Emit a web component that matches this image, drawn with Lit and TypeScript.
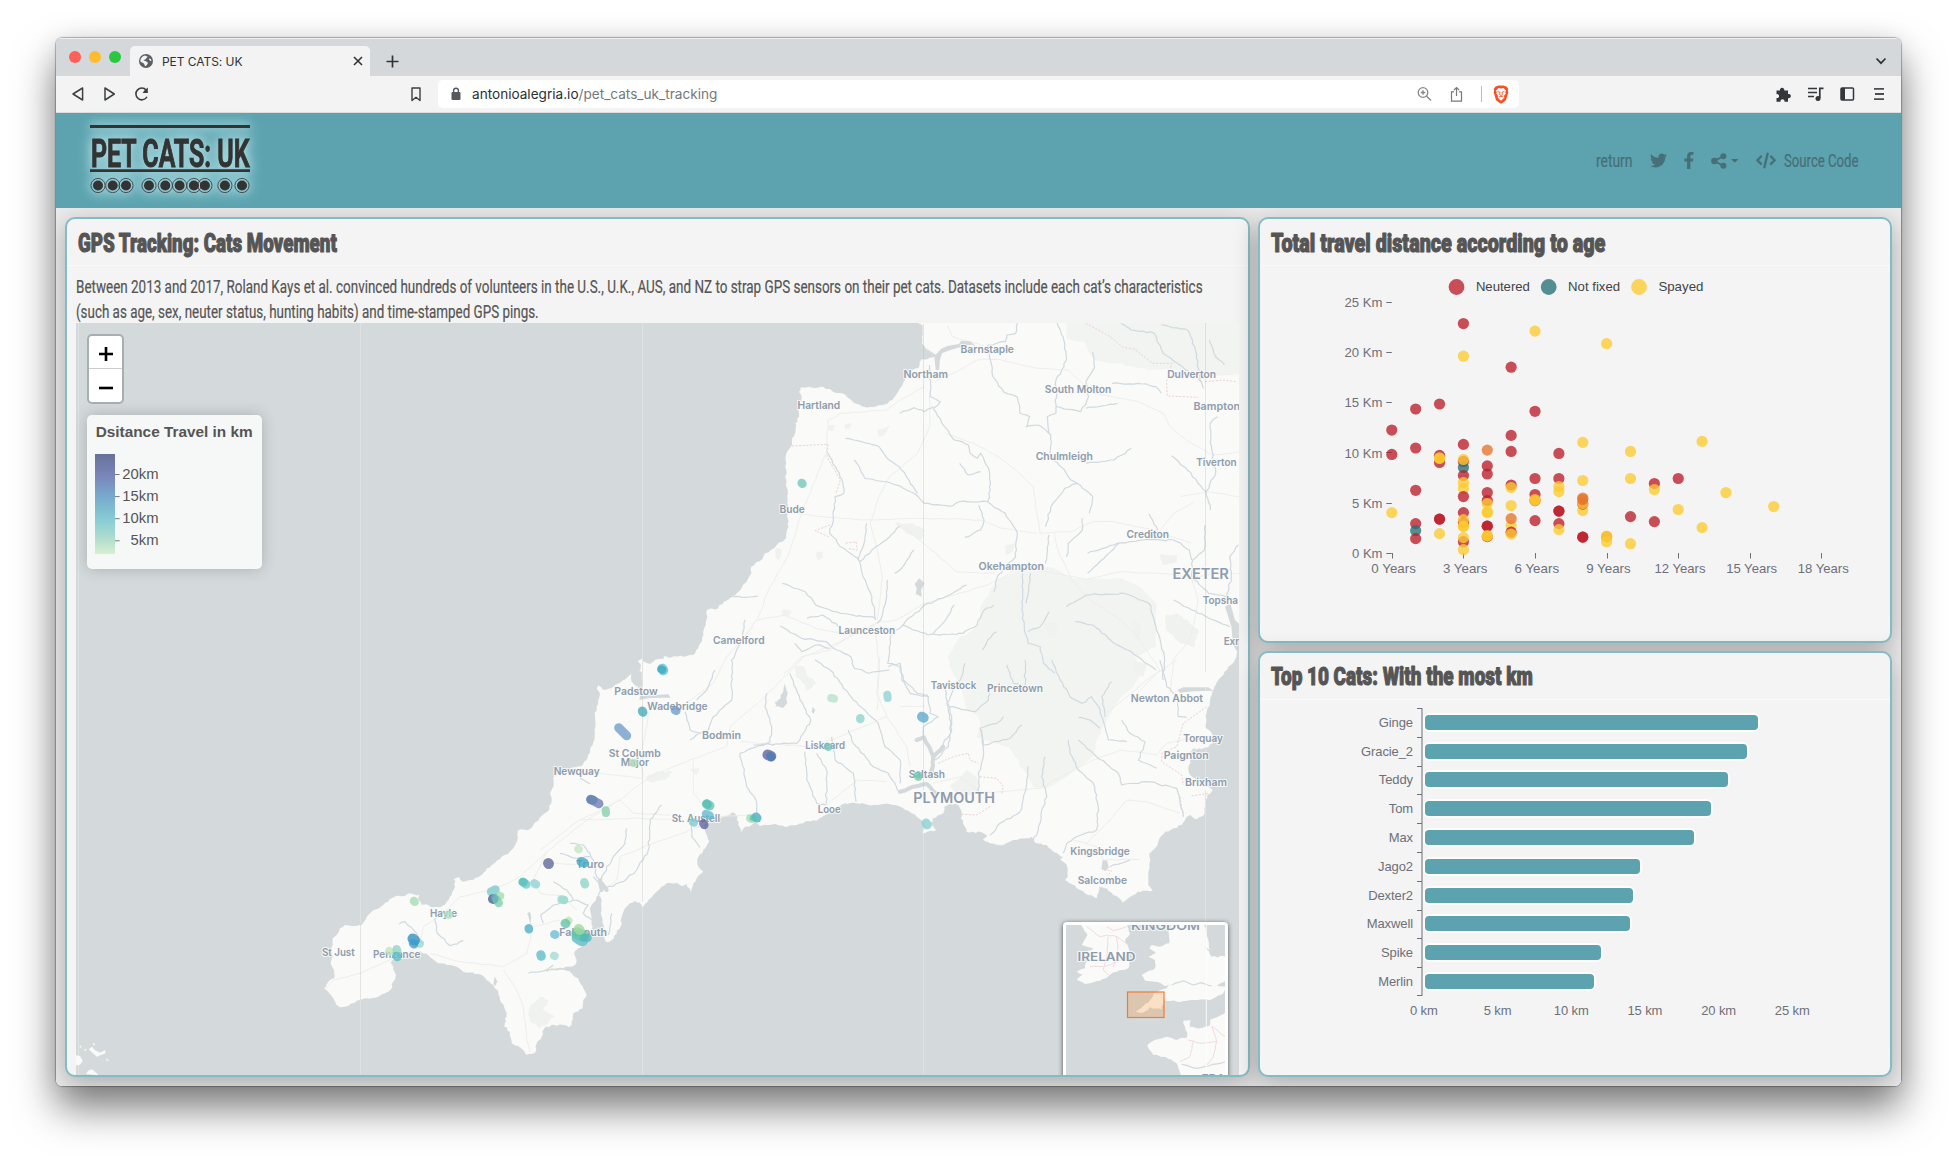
import { LitElement, html, svg, css } from "lit";
import { customElement, property } from "lit/decorators.js";

type Pt = [number, number];

/* ---------- map sheets: each one has its own origin and scale ---------- */
const SHEETS: Record<string, [number, number, number, number]> = {
  A: [700, 310, 2.851, 3],
  B: [540, 560, 3, 3],
  C: [300, 780, 3, 3],
  D: [900, 660, 3, 3],
  E: [0, 900, 3, 3],
};
const place = (s: string, x: number, y: number): Pt => {
  const [ox, oy, sx, sy] = SHEETS[s];
  return [ox + x / sx, oy + y / sy];
};
const pts = (s: string, raw: string): Pt[] =>
  raw.trim().split(/\s+/).map((p) => {
    const [x, y] = p.split(",").map(Number);
    return place(s, x, y);
  });

/* splits every segment and nudges the new vertices, so coasts look rugged */
function rough(list: Pt[], amp: number, step: number): Pt[] {
  let seed = 7;
  const rnd = () => {
    seed = (seed * 16807) % 2147483647;
    return seed / 2147483647 - 0.5;
  };
  const out: Pt[] = [];
  for (let i = 0; i < list.length - 1; i++) {
    const [x0, y0] = list[i];
    const [x1, y1] = list[i + 1];
    const n = Math.max(1, Math.round(Math.hypot(x1 - x0, y1 - y0) / step));
    for (let k = 0; k < n; k++) {
      const t = k / n;
      const a = k ? amp : 0;
      out.push([x0 + (x1 - x0) * t + rnd() * a, y0 + (y1 - y0) * t + rnd() * a]);
    }
  }
  out.push(list[list.length - 1]);
  return out;
}
const d = (list: Pt[], close = false) =>
  "M" + list.map((p) => p[0].toFixed(1) + " " + p[1].toFixed(1)).join("L") + (close ? "Z" : "");

const COAST: Pt[] = [
  ...pts("A", "612,36 634,45 633,100 645,118 668,140 648,148 632,148 622,175 605,180 590,200 570,235 548,270 520,286 495,291 462,289 438,278 420,262 405,250 385,248 370,237 352,231 330,234 310,230 287,232 282,245 290,262 280,290 282,320 272,340 272,365 263,385 262,405 248,425 244,450 246,480 243,500 250,540 250,570 250,610 252,650 245,685 235,695 205,718 185,730 178,748 160,757 146,770 143,795 125,822 105,850 92,860 75,872 55,885 52,895 20,900 18,930 12,955 5,985"),
  ...pts("B", "487,240 475,265 460,285 430,290 400,289 385,293 372,289 370,298 345,300 330,312 308,305 306,296 293,304 303,315 298,335 302,352 298,375 290,380 275,365 275,342 262,352 250,360 240,368 225,375 212,385 195,390 175,376 170,385 180,400 175,420 170,440 165,470 166,500 163,540 150,570 140,600 125,618 105,622 80,632 60,640 40,652 40,680 30,700 34,730 22,755 0,772"),
  ...pts("C", "715,122 700,135 690,147 655,150 652,165 650,185 640,205 625,222 605,230 600,237 580,252 560,265 545,285 520,300 490,305 478,292 462,297 465,320 455,345 440,365 420,382 400,382 385,375 365,375 356,360 358,345 340,343 330,340 315,348 290,347 275,355 265,365 245,378 230,388 215,395 200,410 190,428 178,435 155,438 135,435 120,445 110,465 98,475 95,500 98,530 92,550 103,575 103,595 85,605 72,625 88,640 100,655 110,675 120,682 145,677 165,668 180,660 200,655 235,650 255,640 273,628 280,605 288,585 280,560 272,548 285,535 300,535 330,520 355,515 378,520 395,535 415,550 440,555 470,560 500,578 535,582 560,600 580,615 595,635 600,660 612,680 620,700 613,740 630,755 635,790 655,798 672,812 678,824 705,818 710,790 725,770 733,745 755,735 790,735 805,742 815,735 820,700 848,685 850,660 860,645 850,625 838,605 835,595 815,580 800,572 760,570 740,575 735,567 790,565 825,555 830,540 822,520 835,505 850,497 865,485 866,465 878,440 870,385 895,345 905,360 902,400 912,440 905,455 915,480 920,487 935,480 950,460 962,440 965,410 975,385 990,370 1005,362 1020,368 1028,382 1045,360 1065,340 1085,320 1105,308 1130,308 1145,318 1160,312"),
  ...pts("B", "453,998 460,970 470,955 490,935 475,920 472,900 490,870 508,845 500,825 492,795 510,778 540,775 560,768 578,757 592,770 595,795 605,818 615,800 635,795 645,785 660,798 700,793 735,800 770,795 790,790 795,785 830,782 850,768 870,758 885,745 915,730 950,730 1000,735 1030,732 1060,735 1085,742 1105,752 1130,770 1150,785 1157,800 1148,820"),
  ...pts("D", "62,520 108,510 92,490 98,475 130,460 133,440 150,432 175,435 185,455 183,475 195,500 200,515 245,517 262,528 248,537 270,550 310,555 340,540 380,535 395,530 405,548 440,555 455,570 475,583 490,592 480,598 500,615 503,650 495,660 515,672 540,690 565,705 590,715 598,680 620,685 635,698 655,712 668,728 685,715 712,695 740,692 758,692 745,675 745,645 750,605 748,580 765,565 775,545 795,515 820,505 845,495 855,480 870,465 890,478 912,465 915,430 922,405 938,390 915,375 895,360 870,345 865,325 870,300 866,280 880,265 905,268 925,262 942,248 938,225 918,205 920,160 930,120 940,90 955,60 970,45 985,20 1005,0"),
  ...pts("A", "1530,1030 1545,1020 1560,1000 1560,36"),
];

const WATERS: Pt[][] = [
  pts("A", "1497,890 1512,880 1525,930 1540,945 1540,1040 1520,1005 1515,950"),
  pts("A", "640,112 668,140 672,180 682,180 684,150 690,130 708,122 740,112 745,108 775,104 790,112 770,94 745,92 738,102 705,108 688,116 672,134"),
  pts("C", "690,395 694,410 690,440 688,420 682,400"),
  pts("B", "740,370 735,400 742,430 728,445 718,440 705,430 705,425 722,425 722,405 735,390"),
  pts("A", "625,805 640,820 630,840 632,860 615,852 618,835 612,822"),
  pts("D", "608,600 622,602 626,622 618,632 604,628"),
  pts("D", "832,90 850,82 925,82 940,92 880,94 840,98"),
  pts("B", "300,408 385,403 392,413 330,414 298,420"),
  pts("C", "584,590 592,604 586,618 580,612"),
  pts("B", "818,440 826,450 820,462 815,455"),
  pts("A", "240,1120 250,1150 240,1185 215,1190 222,1170 236,1160"),
];

const GREENS: Pt[][] = [
  pts("A", "1045,36 1560,36 1560,185 1500,195 1460,205 1400,190 1350,180 1280,180 1200,160 1125,150 1095,95 1045,85"),
  [
    ...pts("A", "930,770 1000,770 1060,805 1200,805 1260,835 1300,880 1300,1010 1240,1040 1260,1085"),
    ...pts("D", "700,80 650,130 620,180 605,205 580,290 540,320 500,350 440,385 400,380 370,330 325,260 280,250 230,230 240,200 235,170 200,150 185,90 150,20"),
    ...pts("A", "705,1040 720,1020 740,980 790,950 810,870 850,810"),
  ],
];
const PATCHES: Pt[][] = [
  pts("C", "690,680 720,650 745,660 730,690 765,710 720,745 690,725 685,700"),
  pts("B", "320,650 350,635 400,635 380,655 340,668 318,660"),
  pts("B", "765,320 790,318 800,345 830,370 800,392 790,370 768,350"),
  pts("B", "725,150 755,152 745,170 730,168"),
  pts("A", "365,350 385,345 380,362 368,362"), pts("A", "412,345 432,340 428,355 414,357"),
  pts("A", "505,365 540,345 530,370 512,382"), pts("A", "1310,735 1360,735 1360,755 1320,765"),
  pts("A", "1325,920 1360,910 1420,960 1410,1010 1370,1000 1330,960"), pts("A", "980,940 1015,935 1020,975 995,985"),
  pts("A", "1230,925 1260,945 1250,990 1232,960"), pts("A", "555,640 600,640 640,660 630,690 590,670"),
  pts("A", "330,730 350,725 350,742 335,752"), pts("A", "215,715 235,720 225,750 215,740"),
  pts("A", "870,710 895,700 890,725 872,735"), pts("B", "450,630 478,622 470,645"),
  pts("D", "700,5 740,10 730,50 705,40"), pts("D", "150,380 200,330 230,350 235,395 180,410"),
];

const RIVERS: Pt[][] = [
  ...["820,105 828,150 835,200 865,245 905,262 912,310 940,320 930,350 965,345 1000,375 998,430 1020,460 1050,500 1075,520 1120,560 1110,610",
    "1075,520 1040,535 1000,590 985,650", "1018,40 1035,80 1045,150 1015,210 1015,310 990,320 995,370",
    "1120,125 1125,170 1100,215 1108,260 1085,305 1015,290", "1100,295 1190,280", "1175,220 1260,222 1300,230 1315,250",
    "655,165 657,260 685,275 665,295 690,340 725,390 765,405 770,430 790,445 800,430 825,485 828,540 820,575 870,610 905,670 900,740 850,795 838,845",
    "820,575 740,575 720,588 640,580 610,550 545,520 470,505 440,450", "620,550 575,480 530,440 510,410 460,395 415,385",
    "570,310 610,293 640,305 665,290", "740,460 765,495 800,485", "795,585 810,630 800,660 755,682",
    "365,430 405,510 410,550 385,560 380,620 370,670 400,710 450,745 465,800 490,860 500,930",
    "475,640 470,690 450,750", "570,648 530,690 490,720 455,755", "610,720 570,780 555,790", "535,810 530,870 515,930 505,940",
    "235,820 300,845 330,885 400,910 500,925", "305,925 350,915 395,950", "228,948 290,985 360,995 380,1015 430,1040 440,1075 480,1090 540,1080",
    "270,1000 290,1025 330,1005 370,1015", "545,975 535,1060 570,1070 580,1110 620,1150 650,1155",
    "575,945 650,975 750,970 790,945 810,900 838,885", "760,825 700,860 640,885 560,960", "725,885 700,930 665,970",
    "920,790 918,900 925,960 935,1000 970,1010 980,1060 1010,1090", "943,790 930,880", "845,965 820,990 805,1020", "995,675 985,760",
    "1070,935 1120,945 1180,1000 1220,1020 1300,1080", "1045,890 1100,855 1210,850 1280,880 1300,950 1325,1050 1320,1110",
    "1100,460 1180,450 1230,415", "1345,437 1390,480 1420,520 1443,545", "1475,320 1455,340 1455,400 1470,490 1443,545 1455,600",
    "1440,645 1438,720 1405,750 1400,800 1450,850 1500,860", "1105,730 1190,700 1260,690 1350,690 1395,720 1402,750",
    "1195,700 1160,735 1125,770 1105,790", "1090,625 1090,660 1050,700 1045,740", "1280,612 1305,660", "1350,870 1420,910 1510,950",
    "1315,45 1390,60 1410,110 1425,200 1435,235", "1200,40 1230,60 1295,70 1320,130 1380,175 1430,215", "1452,90 1470,140 1495,165",
    "905,40 900,70 875,75 870,95 820,105", "95,860 130,862 165,858", "935,965 970,950 995,905", "1535,705 1510,740 1515,800 1500,860",
  ].map((r) => pts("A", r)),
  ...["615,180 605,240 575,300 575,420 520,470 505,510 480,520 450,510 435,455", "525,330 500,390 470,420",
    "680,400 675,440 695,500 690,545 600,580 620,680 648,720 650,760", "750,340 780,420 812,480 790,520 770,550 720,552 640,555",
    "795,575 800,660 830,730 860,735", "830,580 860,630 858,730", "925,510 940,550 1000,620 1045,640 1080,700",
    "825,300 870,330 940,420 1015,490 1035,560 1080,600 1080,670", "875,530 885,600 940,640 948,725",
    "1045,320 1080,310 1085,360 1110,400 1165,410 1170,460 1195,470 1175,485 1150,500 1150,530 1130,545",
    "1215,375 1220,420 1235,470 1225,560 1185,600", "365,735 330,780 325,870 290,930 250,965 195,985",
    "260,805 255,850 220,890 185,950 185,990", "455,790 455,830 480,862", "60,880 110,895 150,890", "90,850 130,855 160,900 170,950 185,970",
    "480,520 450,540", "1180,595 1165,650", "120,655 150,672",
  ].map((r) => pts("B", r)),
  ...["298,432 315,425 350,460 365,490", "405,415 412,460 450,497 490,482", "760,305 800,330 820,360 865,375",
    "730,430 722,405 760,375 820,360", "685,580 740,570 760,555", "865,375 850,400 875,420", "880,290 905,320 895,345", "935,400 930,440 925,465",
  ].map((r) => pts("C", r)),
  ...["195,10 185,50 160,90 140,130 155,210 110,285", "365,195 330,235 250,255 240,205 290,190 310,170", "150,140 225,155 265,120 270,100",
    "320,15 340,70 375,80 375,0", "455,0 480,60 510,110 545,130 575,110 600,150 615,200 625,240 680,245", "635,65 605,110 615,170",
    "665,180 690,220 735,245 715,300 770,325", "505,240 510,280 535,330 580,370 595,440 590,510 530,530 500,550 490,580",
    "535,240 590,290 655,340 665,375 740,365 830,385 840,430 850,470", "435,290 425,350 440,410 425,450 420,490 400,545",
    "385,320 380,370 360,455 300,490 270,525", "780,0 800,80 830,110 835,170 860,172", "245,210 250,290 235,340 235,400",
    "535,172 570,180 600,205", "630,620 690,600",
  ].map((r) => pts("D", r)),
];

const ESTUARIES: Pt[][] = [
  pts("D", "105,425 108,400 80,372 40,380 0,395"), pts("D", "96,345 100,290 72,232 50,240"), pts("D", "100,292 130,260"),
  pts("B", "300,340 300,400"), pts("B", "200,990 185,970"), pts("C", "905,330 900,300"),
];

const ROADS: Pt[][] = [
  ...["640,230 570,270 530,300 400,310 365,330 360,430 320,530 280,640 250,740 200,830 165,925 110,1000",
    "655,250 655,350 620,430 540,500 510,560 485,640 505,720 520,800 505,930",
    "670,215 740,180 790,150 850,148 960,175 1050,180 1090,220 1120,250 1250,275 1320,310 1340,350 1400,400 1460,435 1537,425",
    "700,370 780,400 850,440 900,480 950,530 960,610 970,670 1060,665 1120,635 1180,635 1310,665 1400,700",
    "270,610 350,620 460,630 640,625 800,630 860,655 960,670", "580,650 660,720 730,785 840,790",
    "500,940 560,930 640,880 820,825 920,770 1010,790 1100,808 1200,785 1300,790 1400,800 1537,790",
    "500,945 430,975 370,1020 290,1040 240,1090", "165,930 240,915 330,955 430,975", "705,45 720,80 810,108",
    "1010,670 1020,720 1060,810 1100,860 1200,930 1250,985 1310,1080 1240,1160", "1310,665 1350,610 1410,575", "500,960 510,1070 505,1200",
    "1370,560 1450,545 1537,560", "1400,800 1420,870 1400,980 1350,1050 1340,1150",
  ].map((r) => pts("A", r)),
  ...["1010,190 870,260 790,290 700,385 640,440 570,500 560,560 450,600 330,650 240,720 120,780 0,870",
    "600,545 800,560 900,530 1040,470 1100,560 1110,620", "640,200 560,290 520,370 420,440 330,450 300,600 310,650",
    "140,635 310,655", "460,600 460,700 500,750", "860,735 950,660 1040,665", "540,770 620,765 650,770", "120,780 300,775 395,778", "1020,290 1010,400 1040,470",
  ].map((r) => pts("B", r)),
  ...["960,60 860,120 740,215 660,290 580,330 480,350 430,400 370,440 360,490", "390,520 480,545 610,560 680,520 700,440 780,420",
    "360,500 270,540 180,580 100,600 80,625", "610,570 650,630 670,680 680,780 690,815", "745,250 830,253",
    "740,215 700,300 720,340 790,350 830,390", "960,60 1000,100 1110,105", "1200,140 1060,190 960,230 950,300 915,330",
  ].map((r) => pts("C", r)),
  ...["235,400 300,395 420,385 500,340 580,300 660,270 770,285 800,250 900,230", "560,550 620,490 680,420 740,425 840,460",
    "100,370 180,350 230,390 240,420", "0,140 75,138", "620,160 740,60 830,0", "520,540 590,560 610,600 720,598",
  ].map((r) => pts("D", r)),
];

const BORDERS: Pt[][] = [
  ...["1100,40 1170,80 1205,112 1240,118 1290,160 1345,160 1330,215 1332,258 1420,262", "1440,215 1490,210 1530,215",
    "262,408 365,403 362,440 400,510 388,550", "370,645 328,662 370,682", "415,700 445,695 448,720 420,715",
  ].map((r) => pts("A", r)),
  ...["115,310 160,290 205,280 210,300 235,310", "240,350 290,355 310,380 305,400", "185,463 230,465 275,437",
    "920,140 850,190 830,260 785,280 785,305 845,345 850,375", "875,408 925,400", "840,410 850,470", "612,630 635,632 625,645",
  ].map((r) => pts("D", r)),
];

/* sheet, left, right, baseline, text, size */
const PLACES: [string, number, number, number, string, number?][] = [
  ["A", 743, 895, 128, "Barnstaple"], ["A", 580, 707, 205, "Northam"], ["A", 278, 400, 296, "Hartland"],
  ["A", 983, 1173, 249, "South Molton"], ["A", 1332, 1471, 204, "Dulverton"], ["A", 1407, 1540, 300, "Bampton"],
  ["A", 957, 1120, 449, "Chulmleigh"], ["A", 1415, 1530, 467, "Tiverton"], ["A", 227, 299, 609, "Bude"],
  ["A", 1216, 1337, 684, "Crediton"], ["A", 794, 981, 781, "Okehampton"], ["A", 1347, 1508, 806, "EXETER", 14],
  ["A", 1433, 1534, 881, "Topsha"], ["A", 1493, 1537, 1005, "Exr"], ["A", 37, 184, 1002, "Camelford"],
  ["A", 395, 556, 972, "Launceston"], ["A", 658, 788, 1137, "Tavistock"], ["A", 818, 978, 1146, "Princetown"],
  ["A", 1228, 1434, 1176, "Newton Abbot"],
  ["B", 223, 353, 405, "Padstow"], ["B", 322, 503, 449, "Wadebridge"], ["B", 486, 603, 536, "Bodmin"],
  ["B", 206, 362, 590, "St Columb"], ["B", 242, 327, 619, "Major"], ["B", 41, 179, 645, "Newquay"],
  ["B", 395, 540, 786, "St. Austell"], ["B", 833, 902, 760, "Looe"], ["B", 796, 915, 567, "Liskeard"],
  ["B", 1106, 1215, 654, "Saltash"], ["B", 108, 192, 924, "Truro"],
  ["C", 390, 471, 410, "Hayle"], ["C", 778, 921, 468, "Falmouth"], ["C", 219, 361, 534, "Penzance"], ["C", 66, 164, 527, "St Just"],
  ["D", 40, 285, 430, "PLYMOUTH", 14.5], ["D", 850, 969, 246, "Torquay"], ["D", 791, 926, 298, "Paignton"],
  ["D", 855, 981, 378, "Brixham"], ["D", 511, 689, 585, "Kingsbridge"], ["D", 533, 681, 671, "Salcombe"],
];

/* GPS tracks: sheet, x0, y0, x1, y1, colour, width */
const TRACKS: [string, number, number, number, number, string, number?][] = [
  ["A", 290, 519, 291, 520, "#6fc6bd", 8.6], ["A", 374, 1164, 381, 1165, "#b7e2cb", 8], ["A", 534, 1154, 534, 1163, "#8dd3d2", 8],
  ["B", 367, 326, 369, 330, "#62bfca", 10], ["B", 364, 328, 366, 328, "#3ba9c6", 8],
  ["B", 307, 453, 308, 456, "#43abb8", 9], ["B", 405, 451, 408, 451, "#6b9bcb", 8.5], ["B", 236, 503, 259, 526, "#6d9cc9", 9],
  ["B", 278, 608, 281, 608, "#b0dfc0", 8], ["B", 152, 718, 176, 730, "#6d78b6", 9], ["B", 152, 719, 158, 719, "#6286ae", 9],
  ["B", 197, 751, 197, 758, "#84cfa9", 8], ["B", 115, 867, 115, 867, "#c3e6c0", 8],
  ["B", 25, 910, 25, 910, "#5a6896", 10.5], ["B", 124, 905, 131, 908, "#3da6c4", 9.5], ["B", 133, 967, 134, 972, "#8dd3cc", 8.5],
  ["B", 68, 1019, 70, 1019, "#8dd3cc", 8.5], ["B", 683, 584, 692, 588, "#5a62a4", 10.5], ["B", 691, 588, 693, 590, "#4a7ab2", 8],
  ["B", 961, 475, 960, 476, "#8dd3cc", 8.5], ["B", 1146, 470, 1150, 472, "#5ca8d0", 10], ["B", 863, 560, 864, 560, "#6fc6bd", 8],
  ["B", 1134, 646, 1134, 649, "#6fc9ae", 8.5], ["B", 1158, 789, 1161, 793, "#85d0d2", 9],
  ["B", 500, 732, 508, 736, "#64c3b4", 9.5], ["B", 500, 731, 502, 733, "#56bfb4", 8], ["B", 498, 762, 508, 766, "#62b9d0", 8.5],
  ["B", 459, 787, 461, 787, "#7accd2", 8], ["B", 490, 790, 492, 794, "#5c5fa0", 8.5], ["B", 631, 775, 634, 775, "#a4dcae", 8.5],
  ["B", 648, 771, 650, 773, "#44acc0", 9], ["B", 638, 774, 640, 774, "#5fc0b6", 6],
  ["C", 342, 363, 343, 364, "#a4dcae", 8.5], ["C", 444, 404, 446, 404, "#b0e0c4", 8], ["C", 574, 335, 585, 328, "#76c9cd", 9],
  ["C", 578, 357, 580, 357, "#4c5a94", 9.5], ["C", 598, 347, 600, 347, "#a4dcae", 8], ["C", 590, 360, 595, 368, "#79cfb0", 8.5],
  ["C", 584, 352, 584, 354, "#6ab4bb", 7], ["C", 669, 306, 677, 312, "#6cc9c6", 9], ["C", 668, 306, 670, 306, "#56c0bc", 8],
  ["C", 703, 310, 707, 312, "#8dd3d2", 8.5], ["C", 784, 358, 792, 359, "#a2dcd4", 8], ["C", 686, 445, 686, 447, "#4aaec6", 8.5],
  ["C", 763, 463, 765, 463, "#6abdd4", 8.5], ["C", 806, 421, 806, 421, "#b9e4b4", 7], ["C", 795, 430, 797, 430, "#64c3a8", 9],
  ["C", 722, 524, 723, 528, "#5bbdc8", 9], ["C", 762, 527, 763, 527, "#a2dcd4", 8], ["C", 834, 472, 845, 478, "#5ab9c8", 13],
  ["C", 832, 460, 848, 466, "#62c4a6", 12], ["C", 852, 473, 862, 472, "#4fb9bd", 8], ["C", 836, 447, 838, 449, "#9ddb9e", 10],
  ["C", 268, 513, 270, 514, "#bfe5b8", 8], ["C", 290, 508, 291, 512, "#8fd4c4", 8.5], ["C", 289, 528, 291, 530, "#5cbdc8", 8.5],
  ["C", 357, 490, 359, 490, "#9ad8c8", 8], ["C", 338, 476, 343, 480, "#2b8fc4", 10.5], ["C", 339, 490, 341, 492, "#3f9bc8", 8.5],
];

const ISLETS: Pt[][] = [
  pts("E", "266,448 276,440 284,450 300,458 316,450 316,460 290,470"), pts("E", "228,466 240,468 248,482 240,494 228,496"),
  pts("E", "258,522 264,512 276,508 286,516 296,526"), pts("E", "237,440 243,436 244,444"), pts("E", "252,446 260,448 256,454"),
  pts("E", "318,474 328,484 320,482"), pts("E", "277,428 285,432 283,438"),
];

const INSET_LAND: Pt[][] = [
  pts("D", "540,790 562,825 545,855 580,865 550,880 560,905 555,925 530,935 548,944 530,960 555,972 600,962 650,935 685,925 690,880 675,840 690,820 680,790"),
  pts("D", "820,790 805,815 808,850 775,860 755,855 748,865 768,880 745,890 765,900 765,925 725,945 735,962 770,965 795,978 815,970 800,985 762,998 745,1028 708,1055 730,1058 750,1042 785,1048 792,1020 830,1025 875,1020 935,1018 970,1000 980,980 950,978 980,960 980,890 935,890 915,860 930,870 925,840 910,790"),
  pts("D", "985,1055 930,1080 930,1095 900,1105 870,1100 872,1080 850,1082 862,1130 830,1140 800,1130 760,1142 742,1155 760,1185 795,1190 830,1210 845,1260 985,1260"),
];
const INSET_LINES: Pt[][] = [
  pts("D", "560,800 600,830 620,825 650,830 680,850"), pts("D", "625,830 620,890 610,930 625,945"), pts("D", "650,830 655,880 640,920"),
  pts("D", "570,920 620,918 660,900 690,890"), pts("D", "620,800 640,812 680,800"), pts("D", "865,1140 900,1150 950,1145 935,1100"),
  pts("D", "880,1145 870,1190 840,1205"), pts("D", "950,1145 940,1190 920,1215"), pts("D", "935,1098 975,1130"),
];
const INSET_RIVERS: Pt[][] = [
  pts("D", "815,975 850,962 880,975 900,968 935,978"), pts("D", "845,1213 890,1225 925,1218 975,1205"),
];

/* ---------- chart data ---------- */
const SERIES_COLOR: Record<string, string> = { R: "#bc1e29", T: "#276f76", Y: "#fdcb30", O: "#e6752b" };
const SCATTER: string[][] = [
  ["R12.33", "R9.9", "Y4.1"],
  ["R14.43", "R10.54", "R6.32", "R3.0", "T2.3", "R1.5"],
  ["R14.93", "R9.8", "R9.1", "Y9.5", "Y9.55", "R3.45", "R3.45", "Y2.0"],
  ["R22.95", "Y19.7", "R10.9", "R9.2", "T8.6", "Y9.4", "R7.8", "Y7.1", "Y6.5", "R5.7", "R4.1", "R3.1", "Y3.4", "Y2.7", "Y2.75", "R1.2", "Y1.6", "Y0.4"],
  ["O10.33", "R8.75", "R7.95", "R6.1", "R5.3", "Y5.0", "Y4.1", "Y4.15", "R2.75", "R2.75", "R1.7", "Y1.75", "Y1.8"],
  ["R18.6", "R11.8", "R10.2", "R6.85", "Y6.6", "Y4.8", "Y2.8", "O3.5", "R2.15", "Y1.95"],
  ["Y22.2", "R14.2", "R7.5", "R5.9", "R5.3", "Y5.3", "Y5.4", "R3.3"],
  ["R10.0", "R7.5", "Y6.7", "Y6.2", "R4.25", "R4.25", "R3.0", "Y2.4"],
  ["Y11.1", "Y7.3", "Y4.3", "R4.95", "Y5.0", "O5.4", "O5.55", "R1.65", "R1.65"],
  ["Y20.95", "O1.7", "Y1.75", "Y1.2"],
  ["Y10.2", "Y7.5", "R3.7", "Y1.0"],
  ["R7.0", "Y6.4", "R3.2"],
  ["R7.5", "Y4.4"],
  ["Y11.2", "Y2.6"],
  ["Y6.1"],
  [],
  ["Y4.7"],
];
const TOP_CATS: [string, number][] = [
  ["Ginge", 333], ["Gracie_2", 322.6], ["Teddy", 303.4], ["Tom", 286], ["Max", 269.6],
  ["Jago2", 215.4], ["Dexter2", 208], ["Maxwell", 205.2], ["Spike", 176.8], ["Merlin", 169.6],
];

/* Condensed single-line text, squeezed to an exact width */
@customElement("fit-text")
export class FitText extends LitElement {
  @property() text = "";
  @property({ type: Number }) w = 100;
  @property({ type: Number }) h = 24;
  @property({ type: Number }) base = 18;
  @property({ type: Number }) bold = 0;
  static styles = css`
    :host { display: block; line-height: 0; }
    svg { overflow: visible; display: block; }
    text { fill: currentColor; stroke: currentColor; stroke-linejoin: round; }
  `;
  updated() {
    const t = this.renderRoot.querySelector("text") as SVGTextElement;
    const n = t.getComputedTextLength();
    if (n > 0) t.setAttribute("transform", `scale(${this.w / n} 1)`);
  }
  render() {
    return html`<svg width=${this.w} height=${this.h}>
      <text x="0" y=${this.base} stroke-width=${this.bold}>${this.text}</text>
    </svg>`;
  }
}

@customElement("cat-map")
export class CatMap extends LitElement {
  static styles = css`
    :host { display: block; position: relative; height: 752px; width: 1163px; overflow: hidden; background: #d4dadc; font-family: "Liberation Sans", Arial, sans-serif; }
    .base { display: block; }
    .land { fill: #fafaf8; }
    .green { fill: #f2f4f2; }
    .patch { fill: #f0f2ef; }
    .water { fill: #d4dadc; }
    .river { fill: none; stroke: #d0dae0; stroke-width: 1.2; stroke-linejoin: round; }
    .estuary { fill: none; stroke: #d4dadc; stroke-width: 4; stroke-linejoin: round; stroke-linecap: round; }
    .road { fill: none; stroke: #eeeeec; stroke-width: 1; }
    .border { fill: none; stroke: #ecd0d3; stroke-width: 1; stroke-dasharray: 2 1.6; }
    .shore { fill: none; stroke: #f0dcdc; stroke-width: .5; stroke-dasharray: 1 5; }
    .seam { stroke: #000; stroke-opacity: .09; stroke-width: 1; }
    .seam2 { stroke: #fff; stroke-opacity: .22; stroke-width: 1; }
    .place { font-family: Inter, "Open Sans", sans-serif; font-weight: 600; fill: #8e9cad; stroke: #fafaf8; stroke-width: 2; stroke-opacity: .85; paint-order: stroke; stroke-linejoin: round; }
    .track { fill: none; stroke-linecap: round; stroke-opacity: .78; }
    .zoom { position: absolute; left: 11px; top: 11px; width: 33px; border: 2px solid rgba(0,0,0,.2); border-radius: 5px; background-clip: padding-box; background-color: #fff; display: flex; flex-direction: column; }
    .btn { height: 33px; display: flex; align-items: center; justify-content: center; box-sizing: border-box; padding-top: 4px; }
    .btn:first-child { border-bottom: 1px solid #ccc; }
    .legend { position: absolute; left: 11px; top: 92px; width: 175px; height: 154px; box-sizing: border-box; background: #f6f8f7; border-radius: 5px; box-shadow: 0 0 15px rgba(0,0,0,.2); }
    .lt { font-size: 14.6px; font-weight: 700; fill: #555; }
    .ll { font-size: 14.8px; fill: #555; }
    .inset { position: absolute; left: 987px; top: 599px; width: 159px; height: 160px; border: 3px solid #fff; border-radius: 4px; box-shadow: 0 1px 5px rgba(0,0,0,.65); background: #d4dadc; overflow: hidden; }
    .inset svg { display: block; }
    .il { fill: none; stroke: #efd3d6; stroke-width: .8; }
    .box { fill: #ff7800; fill-opacity: .2; stroke: #f47b33; stroke-width: 1.2; }
  `;
  render() {
    return html`
      <svg class="base" width="1163" height="752" viewBox="76 323 1163 752">
        <path class="land" d=${d(rough(COAST, 1.9, 3), true)} />
        ${ISLETS.map((p) => svg`<path class="land" d=${d(p, true)} />`)}
        ${GREENS.map((p) => svg`<path class="green" d=${d(rough(p, 2.5, 6), true)} />`)}
        ${PATCHES.map((p) => svg`<path class="patch" d=${d(rough(p, 2.5, 3), true)} />`)}
        ${ROADS.map((p) => svg`<path class="road" d=${d(rough(p, 1.2, 7))} />`)}
        ${BORDERS.map((p) => svg`<path class="border" d=${d(p)} />`)}
        ${RIVERS.map((p) => svg`<path class="river" d=${d(rough(p, 2, 4))} />`)}
        ${ESTUARIES.map((p) => svg`<path class="estuary" d=${d(rough(p, 1.5, 5))} />`)}
        ${WATERS.map((p) => svg`<path class="water" d=${d(p, true)} />`)}
        <path class="shore" d=${d(rough(COAST.slice(0, -4), 1.9, 3))} />
        <path class="seam2" d="M360.5 323V1075M642.5 323V1075M923.5 323V1075M1205.5 323V1075M78.5 323V1075" />
        <path class="seam" d="M360.5 924V1000M642.5 662V902M923.5 324V790M1205.5 323V672M1205.5 790V800" />
        ${PLACES.map(([s, l, r, b, t, size]) => {
          const [x0, y] = place(s, l, b);
          const x1 = place(s, r, b)[0];
          return svg`<text class="place" x=${x0} y=${y} font-size=${size ?? 10.5} textLength=${x1 - x0} lengthAdjust="spacingAndGlyphs">${t}</text>`;
        })}
        ${TRACKS.map(([s, x0, y0, x1, y1, c, w]) =>
          svg`<path class="track" stroke=${c} stroke-width=${w ?? 9} d=${d([place(s, x0, y0), place(s, x1 + 1, y1 + 1)])} />`)}
      </svg>
      <div class="zoom">
        <div class="btn"><svg width="14" height="14"><path d="M7 0V14M0 7H14" stroke="#000" stroke-width="2.6" /></svg></div>
        <div class="btn"><svg width="14" height="14"><path d="M0 7H14" stroke="#000" stroke-width="2.6" /></svg></div>
      </div>
      <div class="legend">
        <svg width="175" height="154">
          <defs>
            <linearGradient id="ramp" x1="0" y1="0" x2="0" y2="1">
              <stop offset="0" stop-color="#67729a" /><stop offset=".22" stop-color="#7a85bb" />
              <stop offset=".42" stop-color="#78a8cd" /><stop offset=".65" stop-color="#86cbd5" />
              <stop offset=".87" stop-color="#b5e0cd" /><stop offset="1" stop-color="#daefcd" />
            </linearGradient>
          </defs>
          <text class="lt" x="8.7" y="22" textLength="157" lengthAdjust="spacingAndGlyphs">Dsitance Travel in km</text>
          <rect x="8" y="39" width="20" height="100" fill="url(#ramp)" />
          ${["20km", "15km", "10km", "5km"].map((t, i) => svg`
            <path d="M28 ${59.5 + i * 22.1}h4.6" stroke="#777" />
            <text class="ll" x="71.5" y=${64 + i * 22.1} text-anchor="end">${t}</text>`)}
        </svg>
      </div>
      <div class="inset">
        <svg width="159" height="160" viewBox="1066 925 159 160">
          ${INSET_LAND.map((p) => svg`<path class="land" d=${d(rough(p, 1.6, 3), true)} />`)}
          ${INSET_LINES.map((p) => svg`<path class="il" d=${d(rough(p, 1.2, 4))} />`)}
          ${INSET_RIVERS.map((p) => svg`<path class="river" d=${d(rough(p, 1.4, 4))} />`)}
          <path d="M1206.3 925V1085" stroke="#fff" stroke-opacity=".8" />
          <text class="place" x="1131" y="929.5" font-size="12" textLength="69" lengthAdjust="spacingAndGlyphs">KINGDOM</text>
          <text class="place" x="1077.5" y="961" font-size="12" textLength="58" lengthAdjust="spacingAndGlyphs">IRELAND</text>
          <text class="place" x="1201.5" y="1082.5" font-size="12">FRA</text>
          <rect class="box" x="1127.5" y="992" width="36.5" height="25.5" />
        </svg>
      </div>`;
  }
}

@customElement("age-chart")
export class AgeChart extends LitElement {
  static styles = css`
    :host { display: block; }
    svg { display: block; }
    text { font-family: "Liberation Sans", Arial, sans-serif; font-size: 13px; fill: #6e7079; }
    .key { fill: #444; }
    .tick { stroke: #6e7079; fill: none; }
    .dot { fill-opacity: .78; }
  `;
  render() {
    const X = (a: number) => 1391.8 + a * 23.87;
    const Y = (k: number) => 553.7 - k * 10.027;
    const keys: [number, string, string, number][] = [
      [1456.5, "R", "Neutered", 54], [1548.7, "T", "Not fixed", 52], [1639, "Y", "Spayed", 45],
    ];
    return html`<svg width="630" height="375" viewBox="1260 266 630 375">
      ${keys.map(([x, c, t, w]) => svg`
        <circle class="dot" cx=${x} cy="287" r="7.9" fill=${SERIES_COLOR[c]} />
        <text class="key" x=${x + 19.4} y="291.3" textLength=${w} lengthAdjust="spacingAndGlyphs">${t}</text>`)}
      ${[0, 5, 10, 15, 20, 25].map((k) => svg`
        <text x="1382.5" y=${Y(k) + 4.2} text-anchor="end" textLength=${k > 5 ? 38 : 30.5} lengthAdjust="spacingAndGlyphs">${k} Km</text>
        <path class="tick" d="M1386.3 ${Math.round(Y(k)) - 0.5}h5.5" />`)}
      ${[0, 3, 6, 9, 12, 15, 18].map((a) => svg`
        <text x=${X(a) + 1.8} y="572.6" text-anchor="middle" textLength=${a > 9 ? 51 : 44.5} lengthAdjust="spacingAndGlyphs">${a} Years</text>
        <path class="tick" d="M${Math.round(X(a)) + 0.5} 553v5.5" />`)}
      ${SCATTER.map((list, age) => list.map((v) =>
        svg`<circle class="dot" cx=${X(age)} cy=${Y(parseFloat(v.slice(1)))} r="5.6" fill=${SERIES_COLOR[v[0]]} />`))}
    </svg>`;
  }
}

@customElement("top-chart")
export class TopChart extends LitElement {
  static styles = css`
    :host { display: grid; grid-template-columns: 156px 7px 1fr; grid-template-rows: 288px 30px; padding-top: 8px; font: 13px "Liberation Sans", Arial, sans-serif; color: #6e7079; }
    .names, .bars { display: grid; grid-template-rows: repeat(10, 1fr); align-items: center; }
    .names { justify-items: end; padding-right: 3px; }
    .names span { letter-spacing: -.1px; }
    .axis { display: block; overflow: visible; }
    .bars { justify-items: start; position: relative; }
    .bar { height: 15px; background: #5ca3af; border-radius: 4px; box-shadow: 0 0 0 1.7px #fff; margin-left: 1.5px; }
    .scale { grid-column: 3; display: flex; padding-top: 7px; margin-left: -36px; }
    .scale span { width: 73.7px; text-align: center; flex: none; letter-spacing: -.1px; }
  `;
  render() {
    return html`
      <div class="names">${TOP_CATS.map(([n]) => html`<span>${n}</span>`)}</div>
      <svg class="axis" width="7" height="288">
        <path fill="none" stroke="#6e7079" d="M6 0V288${Array.from({ length: 11 }, (_, i) => `M1 ${Math.round(i * 28.8) + (i === 10 ? -0.5 : 0.5)}H6`).join("")}" />
      </svg>
      <div class="bars">${TOP_CATS.map(([, w]) => html`<div class="bar" style="width:${w}px"></div>`)}</div>
      <div class="scale">${[0, 5, 10, 15, 20, 25].map((k) => html`<span>${k} km</span>`)}</div>`;
  }
}

@customElement("app-root")
export class AppRoot extends LitElement {
  static styles = css`
    :host { display: block; width: 1957px; height: 1160px; background: #fff; overflow: hidden; font-family: Roboto, "Liberation Sans", sans-serif; }
    .desk { display: flex; padding: 38px 56px 0; height: 1160px; box-sizing: border-box; }
    .window { width: 1845px; height: 1048px; display: flex; flex-direction: column; border-radius: 6px; overflow: hidden; background: #f3f3f3; flex: none; }
    .shade { border-radius: 7px; height: 1048px; box-shadow: 0 0 1px 1px rgba(0,0,0,.28), 0 22px 40px rgba(0,0,0,.52), 0 0 26px rgba(0,0,0,.08); }
    .tabs { height: 38px; background: #d4d8db; box-shadow: inset 0 1px #f0f0f0; display: flex; align-items: flex-end; flex: none; }
    .lights { display: flex; gap: 8px; width: 61px; padding-left: 13px; align-self: center; }
    .lights i { width: 12px; height: 12px; border-radius: 50%; }
    .red { background: #fe5f57; } .amber { background: #febb2e; } .green { background: #2ac840; }
    .tab { width: 240px; height: 30px; background: #f3f3f3; border-radius: 5px 5px 0 0; display: flex; align-items: center; box-sizing: border-box; padding: 0 6px 0 9px; }
    .tab svg { flex: none; }
    .name { font: 12px Inter, sans-serif; letter-spacing: -.05px; color: #2d3236; flex: 1; margin-left: 9px; }
    .plus { margin: 0 0 8px 15.5px; }
    .chev { margin: 0 14px 10px auto; }
    .bar { height: 36px; display: flex; align-items: center; flex: none; border-bottom: 1px solid #ddd; }
    .nav { display: flex; gap: 17px; padding-left: 15px; width: 339px; }
    .mark { width: 28px; height: 16px; }
    .mark svg { display: block; }
    .url { width: 1081px; height: 28px; background: #fff; border-radius: 5px; display: flex; align-items: center; box-sizing: border-box; padding: 0 10px 0 12px; font: 13.6px Inter, sans-serif; color: #2b2f33; }
    .addr { margin-left: 10px; flex: 1; }
    .path { color: #74787c; }
    .div { width: 1px; height: 16px; background: #b9bcc0; margin: 0 11px 0 18px; }
    .share { margin-left: 18px; }
    .tools { display: flex; gap: 15px; margin-left: auto; padding-right: 14px; align-items: center; }
    .head { height: 95px; background: #5ca3af; display: flex; justify-content: space-between; flex: none; }
    .logo { display: block; margin-left: 34px; overflow: visible; filter: drop-shadow(0 0 4px #a9dbe2) drop-shadow(0 0 7px #a0d3da); }
    .menu { display: flex; align-items: center; color: #467076; padding: 0 42.5px 0 0; }
    .menu fit-text { font-size: 18.5px; }
    .gap1 { margin-left: 17.5px; } .gap2 { margin-left: 17px; } .gap3 { margin-left: 17px; } .gap4 { margin-left: 17px; } .gap5 { margin-left: 8px; }
    .main { flex: 1; display: grid; grid-template-columns: 1185px 634px; grid-template-rows: 426px 426px; gap: 8px; padding: 9px 9px; background: #ebebeb; overflow: hidden; }
    .card { box-sizing: border-box; border: 2px solid #84bcc5; border-radius: 10px; background: #f4f4f4; overflow: hidden; box-shadow: 0 7px 26px rgba(0,0,0,.28); display: flex; flex-direction: column; }
    .wide { grid-row: span 2; }
    .title { height: 46px; border-bottom: 1px solid #f9f9f9; padding-left: 11px; color: #555; font: 900 25.5px Roboto, "Liberation Sans", sans-serif; flex: none; }
    .intro { padding: 7px 0 0 9px; height: 57px; box-sizing: border-box; color: #555; font-size: 18px; flex: none; }
    .map { padding-left: 9px; }
  `;
  render() {
    const dots = [98, 112.7, 126, 149, 165.3, 179.6, 193.9, 204.9, 224.9, 242];
    return html`
      <div class="desk"><div class="shade"><div class="window">
        <div class="tabs">
          <div class="lights"><i class="red"></i><i class="amber"></i><i class="green"></i></div>
          <div class="tab">
            <svg width="14" height="14" viewBox="0 0 14 14"><circle cx="7" cy="7" r="7" fill="#5c6065" /><path d="M6.2 1.4C7 2.2 7.8 2 8.6 2.6C8.4 4 7.2 3.9 6.8 5C6.2 6 4.6 5.6 4.6 6.8C5.8 7 7 6.900 7.8 8C9 8.200 9.200 9.200 8.300 10.200C7.700 11 7 12.200 6 12.200C5.600 11 5.400 10 4.600 9.200C3.600 8.600 2.200 8 1.400 7.400C1.200 4.600 3 2 6.200 1.400ZM10.600 4.200C11.600 4.600 12.400 5.600 12.400 7C11.400 7.200 10.400 6.600 10 5.600Z" fill="#f3f3f3" /></svg>
            <span class="name">PET CATS: UK</span>
            <svg width="12" height="12"><path d="M2 2L10 10M10 2L2 10" stroke="#333" stroke-width="1.6" /></svg>
          </div>
          <svg class="plus" width="13" height="13"><path d="M6.5 .5V12.5M.5 6.5H12.5" stroke="#333" stroke-width="1.7" /></svg>
          <svg class="chev" width="12" height="10"><path d="M1.5 2.5L6 7.2L10.5 2.5" fill="none" stroke="#333" stroke-width="1.7" /></svg>
        </div>
        <div class="bar">
          <div class="nav">
            <svg width="14" height="16"><path d="M11.6 2V14L2 8Z" fill="none" stroke="#3c4043" stroke-width="1.5" stroke-linejoin="round" /></svg>
            <svg width="14" height="16"><path d="M3 2V14L12.300 8Z" fill="none" stroke="#3c4043" stroke-width="1.5" stroke-linejoin="round" /></svg>
            <svg width="16" height="16"><path d="M13.6 11.4A5.9 5.9 0 1 1 13.2 4" fill="none" stroke="#3c4043" stroke-width="1.6" stroke-linecap="round" /><path d="M14.800 1.600V7H9.600L11.400 4.600Z" fill="#3c4043" /></svg>
          </div>
          <div class="mark"><svg width="12" height="16"><path d="M2 2H10V14.500L6 11.300L2 14.500Z" fill="none" stroke="#3c4043" stroke-width="1.4" stroke-linejoin="round" /></svg></div>
          <div class="url">
            <svg width="12" height="14"><rect x="1.5" y="5" width="9" height="8" rx="1" fill="#55595e" /><path d="M3.6 5.5V3.6A2.4 2.4 0 0 1 8.4 3.6V5.5" fill="none" stroke="#55595e" stroke-width="1.4" /></svg>
            <span class="addr">antonioalegria.io<span class="path">/pet_cats_uk_tracking</span></span>
            <svg width="15" height="16"><circle cx="6" cy="6.5" r="4.8" fill="none" stroke="#85898d" stroke-width="1.3" /><path d="M9.6 10.2L14 14.6M6 4.2V8.8M3.7 6.5H8.3" stroke="#85898d" stroke-width="1.4" /></svg>
            <svg class="share" width="13" height="17"><path d="M4 5.8H1.5V15.2H11.5V5.8H9M6.5 10V1.8M3.8 4.2L6.5 1.5L9.2 4.2" fill="none" stroke="#75797d" stroke-width="1.2" /></svg>
            <div class="div"></div>
            <svg width="16" height="19" viewBox="0 0 16 19"><path d="M4.4 1L5.6 .4H10.4L11.6 1L13.4 1.4L15.4 4L14.8 5.6L15.3 7.2L13.2 14.4Q12.8 15.4 12 16L8.6 18.4Q8 18.8 7.4 18.4L4 16Q3.2 15.4 2.8 14.4L.7 7.2L1.2 5.6L.6 4L2.6 1.4Z" fill="#fb4f22" /><path d="M8 3.4L10.6 3L13 5.4L12.2 7.4L12.8 8.4L10.8 11L11.4 12.4L8 15.8L4.6 12.4L5.2 11L3.2 8.4L3.8 7.4L3 5.4L5.4 3Z" fill="#fff" /><path d="M4.6 6.6L7 7.2L6.6 9.6L8 10.6L9.4 9.6L9 7.2L11.4 6.6M6 12L8 11.2L10 12" fill="none" stroke="#fb4f22" stroke-width=".9" /></svg>
          </div>
          <div class="tools">
            <svg width="17" height="17" viewBox="0 0 17 17"><path d="M1.5 4.6H5A2.2 2.2 0 1 1 9.2 4.6H13V8A2.2 2.2 0 1 1 13 12.2V15.8H9.4A2 2 0 1 0 5.6 15.8H1.5V12A2 2 0 1 0 1.5 8.2Z" fill="#33373a" /></svg>
            <svg width="17" height="16"><path d="M1 2.5H10M1 6.5H10M1 10.5H7" stroke="#33373a" stroke-width="1.6" /><path d="M12.8 12V2.4H16.5" fill="none" stroke="#33373a" stroke-width="1.7" /><circle cx="11" cy="12.4" r="2.5" fill="#33373a" /></svg>
            <svg width="17" height="16"><rect x="2" y="2" width="12.5" height="12" rx="1" fill="none" stroke="#33373a" stroke-width="1.5" /><rect x="2" y="2" width="4" height="12" fill="#33373a" /></svg>
            <svg width="16" height="16"><path d="M3 2.8H13M4 8H13M3 13.2H13" stroke="#4a4e52" stroke-width="1.8" /></svg>
          </div>
        </div>
        <div class="head">
          <svg class="logo" width="160" height="95" viewBox="90 113 160 95">
            <path d="M90 126.500H250M90 170.600H250" stroke="#333" stroke-width="2.8" />
            <text x="91" y="167" font-size="38" font-weight="600" fill="#333" stroke="#333" stroke-width="1.1" textLength="158.500" lengthAdjust="spacingAndGlyphs">PET CATS: UK</text>
            ${dots.map((x) => svg`<circle cx=${x} cy="185.500" r="5" fill="#333" /><circle cx=${x} cy="185.500" r="7.1" fill="none" stroke="#333" stroke-width=".8" />`)}
          </svg>
          <div class="menu">
            <fit-text text="return" w="36.5" h="24" base="18" bold=".25"></fit-text>
            <svg class="gap1" width="17" height="15" viewBox="0 0 512 420"><path fill="#467076" d="M459 106c.3 4.500.3 9.100.3 13.600 0 138.700-105.600 298.600-298.600 298.600-59.500 0-114.700-17.200-161.100-47.100 8.400 1 16.600 1.300 25.300 1.300 49.100 0 94.200-16.600 130.300-44.800-46.100-1-84.800-31.200-98.100-72.800 6.500 1 13 1.600 19.800 1.600 9.400 0 18.800-1.300 27.600-3.600-48.100-9.700-84.100-52-84.100-103v-1.300c14 7.800 30.200 12.700 47.400 13.300-28.300-18.800-46.800-51-46.800-87.400 0-19.500 5.200-37.400 14.300-53 51.700 63.700 129.300 105.300 216.400 109.800-1.600-7.800-2.600-15.900-2.600-24C249.100 49.200 296 2 354 2c30.200 0 57.500 12.700 76.700 33.100 23.700-4.500 46.500-13.300 66.600-25.300-7.800 24.400-24.400 44.800-46.100 57.800 21.100-2.300 41.600-8.100 60.400-16.200-14.300 20.800-32.200 39.300-52.600 54.300z" /></svg>
            <svg class="gap2" width="10" height="17" viewBox="20 0 285 512"><path fill="#467076" d="M279 288l14-92h-89v-60c0-25 12-50 52-50h41V7s-37-7-72-7c-73 0-121 44-121 125v71H23v92h81v224h100V288z" /></svg>
            <svg class="gap3" width="16" height="16" viewBox="0 0 16 16"><path d="M12.500 3L3.500 8L12.500 13" fill="none" stroke="#467076" stroke-width="2" /><circle cx="12.400" cy="3.200" r="3" fill="#467076" /><circle cx="3.400" cy="8" r="3.200" fill="#467076" /><circle cx="12.400" cy="12.800" r="3" fill="#467076" /></svg>
            <svg width="12" height="6"><path d="M4 1H11.500L7.750 4.800Z" fill="#467076" /></svg>
            <svg class="gap4" width="20" height="17" viewBox="0 0 20 17"><path d="M5.800 3.800L1.400 8.200L5.800 12.600M14.200 3.800L18.600 8.200L14.200 12.600M11.800 .8L8.200 16.200" fill="none" stroke="#467076" stroke-width="2.300" /></svg>
            <fit-text class="gap5" text="Source Code" w="74.5" h="24" base="18" bold=".25"></fit-text>
          </div>
        </div>
        <div class="main">
          <section class="card wide">
            <div class="title"><fit-text text="GPS Tracking: Cats Movement" w="259" h="46" base="33" bold="1.1"></fit-text></div>
            <div class="intro">
              <fit-text text="Between 2013 and 2017, Roland Kays et al. convinced hundreds of volunteers in the U.S., U.K., AUS, and NZ to strap GPS sensors on their pet cats. Datasets include each cat’s characteristics" w="1128" h="25.300" base="19.700" bold=".2"></fit-text>
              <fit-text text="(such as age, sex, neuter status, hunting habits) and time-stamped GPS pings." w="463" h="24" base="19.700" bold=".2"></fit-text>
            </div>
            <div class="map"><cat-map></cat-map></div>
          </section>
          <section class="card">
            <div class="title"><fit-text text="Total travel distance according to age" w="334.500" h="46" base="33" bold="1.1"></fit-text></div>
            <age-chart></age-chart>
          </section>
          <section class="card">
            <div class="title"><fit-text text="Top 10 Cats: With the most km" w="262" h="46" base="32.500" bold="1.1"></fit-text></div>
            <top-chart></top-chart>
          </section>
        </div>
      </div></div></div>`;
  }
}
